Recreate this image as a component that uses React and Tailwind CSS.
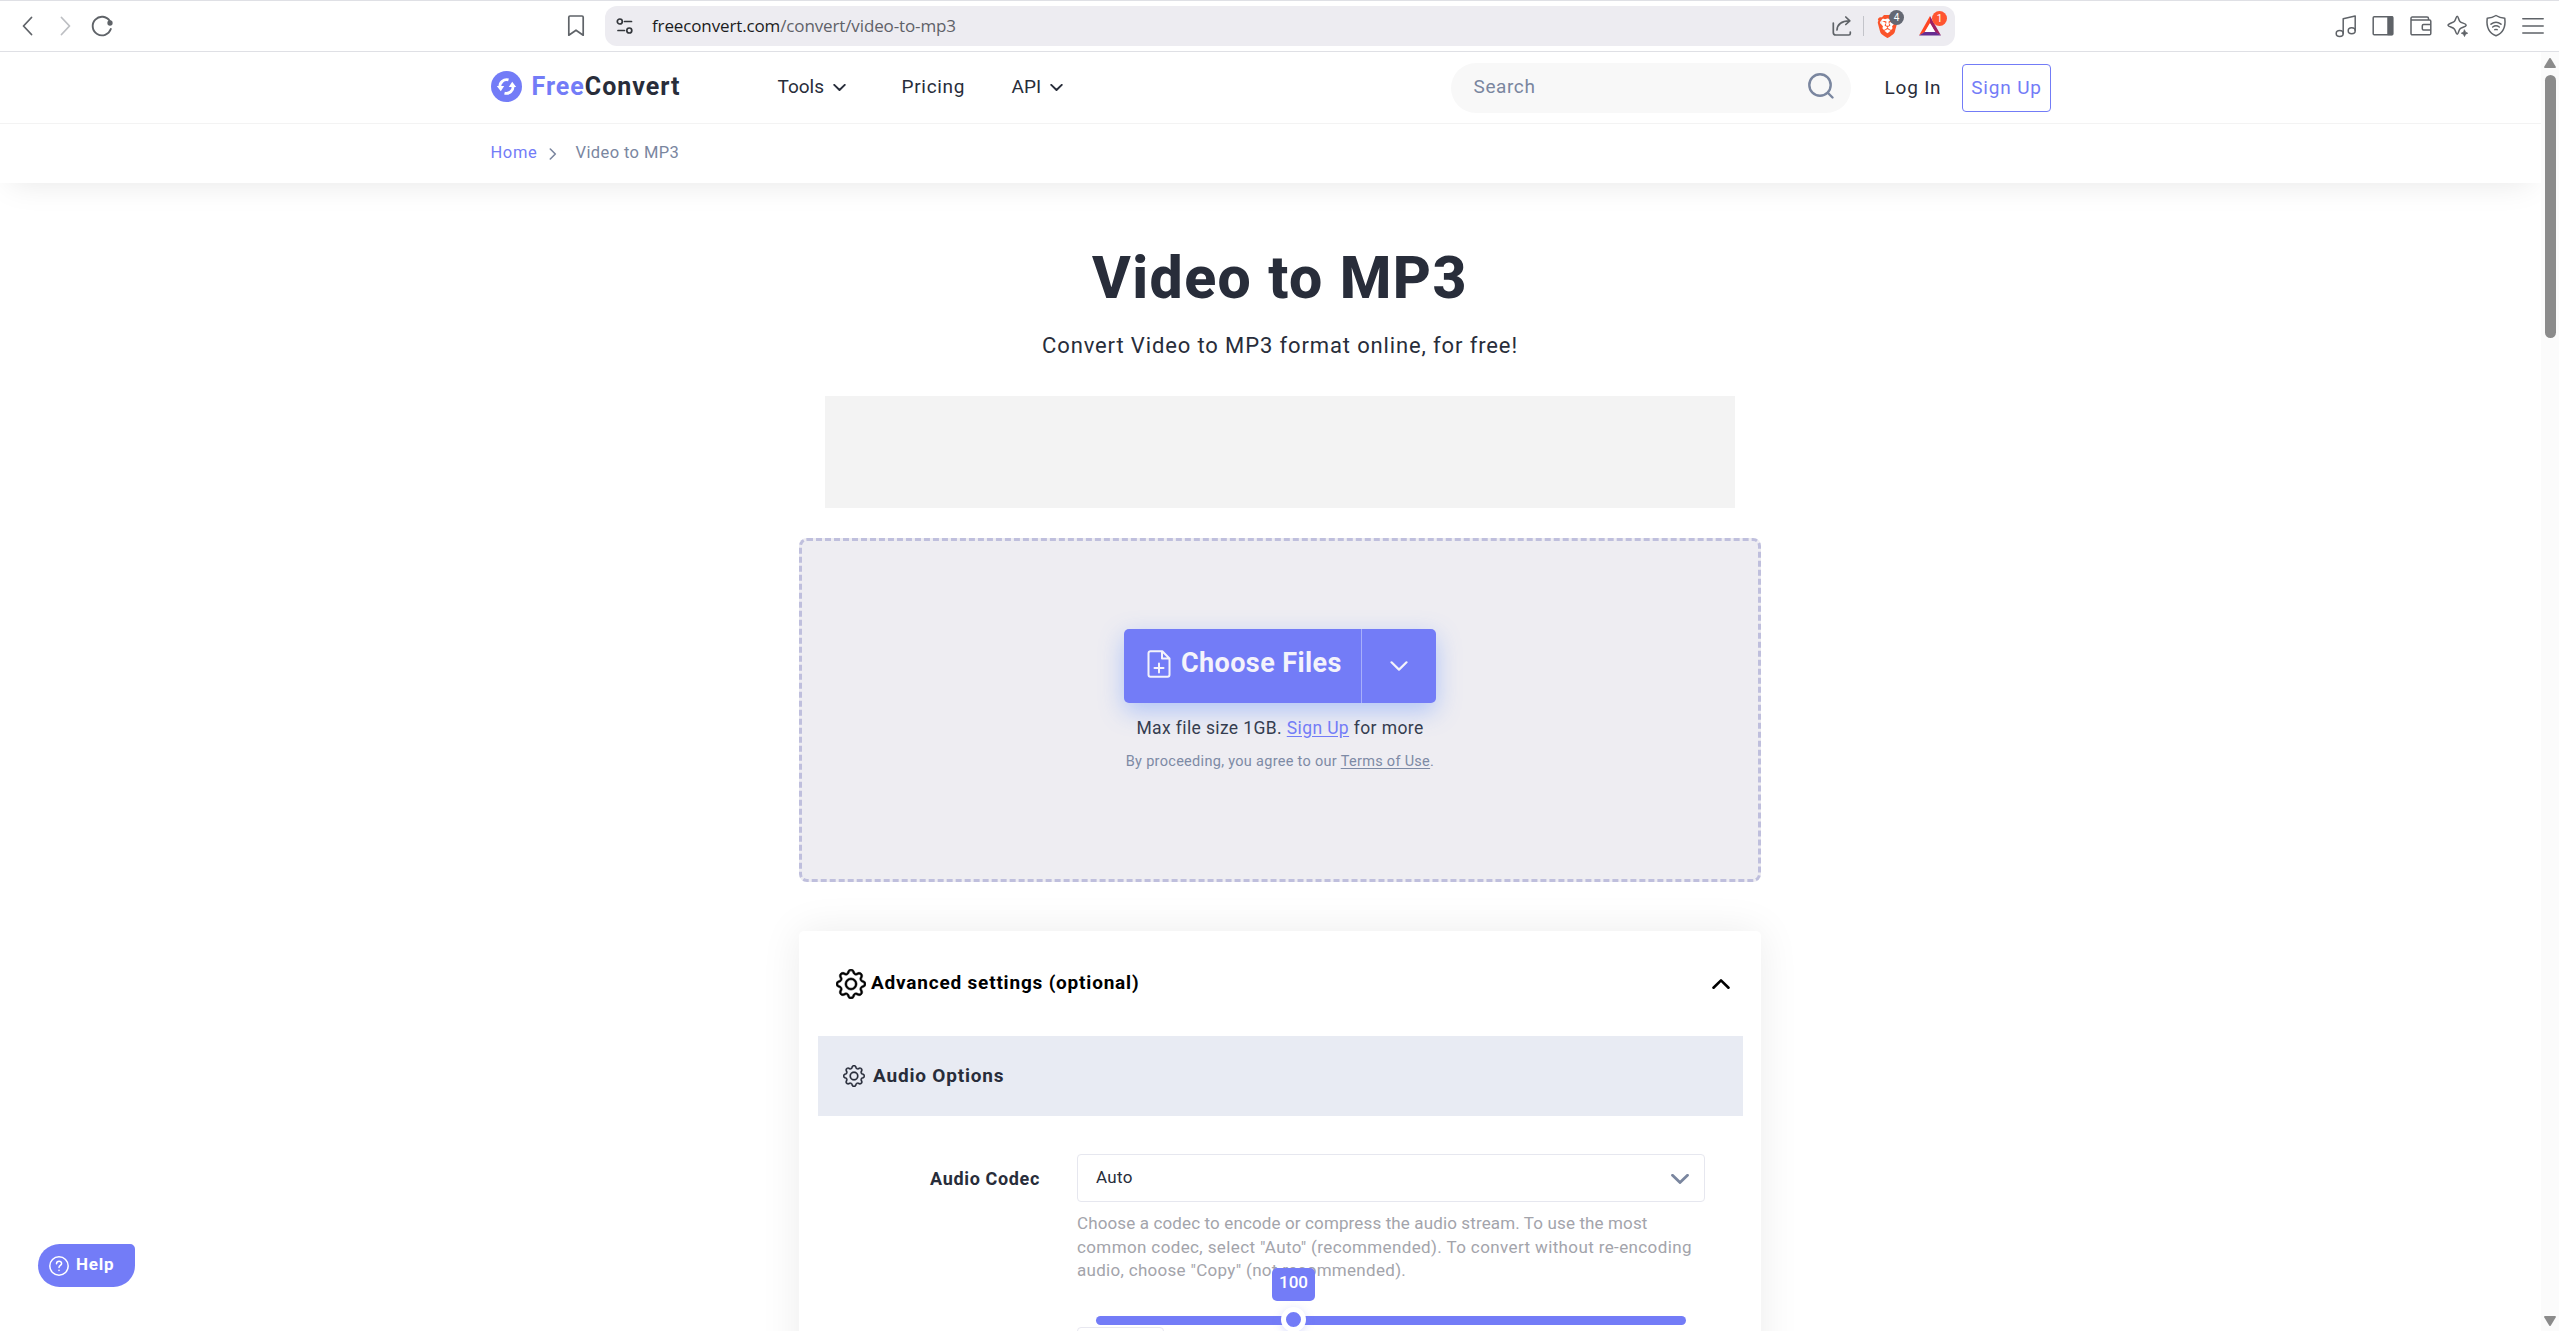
import React from "react";
import { SiBrave } from "react-icons/si";
import { BsGear } from "react-icons/bs";

function Chevron({ className, w = 2.6 }) {
  return (
    <svg viewBox="0 0 18 10" className={className} fill="none" stroke="currentColor" strokeWidth={w} strokeLinecap="round" strokeLinejoin="round">
      <path d="M1.5 1.3 9 8.6l7.5-7.3" />
    </svg>
  );
}

function ToolIcon({ children }) {
  return (
    <svg viewBox="0 0 24 24" className="h-6 w-6 shrink-0" fill="none" stroke="currentColor" strokeWidth="1.5" strokeLinecap="round" strokeLinejoin="round">
      {children}
    </svg>
  );
}

function BrowserBar() {
  return (
    <div className="flex h-[52px] shrink-0 items-center border-y border-[#dfe0e5] bg-white text-[#5f6368]">
      <div className="flex w-[558px] items-center pl-4">
        <svg viewBox="0 0 24 24" className="h-6 w-6" fill="none" stroke="currentColor" strokeWidth="1.8" strokeLinecap="round" strokeLinejoin="round">
          <path d="M15.5 3.5 7.5 12l8 8.5" />
        </svg>
        <svg viewBox="0 0 24 24" className="ml-3.5 h-6 w-6 text-[#bdbfc3]" fill="none" stroke="currentColor" strokeWidth="1.8" strokeLinecap="round" strokeLinejoin="round">
          <path d="m7.500 3.500 8 8.500-8 8.500" />
        </svg>
        <svg viewBox="0 0 24 24" className="ml-3 h-6 w-6" fill="none" stroke="currentColor" strokeWidth="1.9" strokeLinecap="round">
          <path d="M20.800 15a9.300 9.300 0 1 1-1-8" />
          <circle cx="20" cy="9" r="1.700" fill="currentColor" />
        </svg>
      </div>
      <div className="flex w-[47px] items-center pl-1.5">
        <svg viewBox="0 0 24 24" className="h-6 w-6" fill="none" stroke="currentColor" strokeWidth="1.7" strokeLinejoin="round">
          <path d="M6 2h12a1.200 1.200 0 0 1 1.200 1.200v18l-7.200-5-7.200 5v-18A1.200 1.200 0 0 1 6 2z" />
        </svg>
      </div>
      <div className="flex h-10 w-[1350px] items-center rounded-xl bg-[#edecf1] pr-[13px] pl-[10px]">
        <svg viewBox="0 0 20 20" className="h-5 w-5 text-[#33363b]" fill="none" stroke="currentColor" strokeWidth="1.700" strokeLinecap="round">
          <circle cx="4.800" cy="5.500" r="2.500" />
          <path d="M9.500 5.500h7M3 14.500h6.500" />
          <circle cx="14.300" cy="14.500" r="2.500" />
        </svg>
        <span className="ml-[17px] pb-px font-['Open_Sans',sans-serif] text-[17px] leading-none tracking-[-0.13px] text-[#5f6168]">
          <span className="text-[#1b1c21]">freeconvert.com</span>/convert/video-to-mp3
        </span>
        <div className="ml-auto flex items-center">
          <svg viewBox="0 0 22 22" className="h-[22px] w-[22px]" fill="none" stroke="currentColor" strokeWidth="1.700" strokeLinecap="round" strokeLinejoin="round">
            <path d="M2.300 8v9.500a2.500 2.500 0 0 0 2.500 2.500h13a1.500 1.500 0 0 0 1.500-1.500V17" />
            <path d="M6 15c.3-5.500 4-9 12.500-9.200M14.800 2l4 3.800-4 3.700" />
          </svg>
          <div className="ml-[10px] h-5 w-px bg-[#c3c4ca]" />
          <div className="relative ml-[12px] flex h-6 w-[23px] items-center justify-center text-[#fb542b]">
            <div className="absolute h-4 w-3 bg-white" />
            <SiBrave className="relative h-[23px] w-[23px]" />
            <span className="absolute -top-[4px] left-[13px] flex h-[15px] w-[15px] items-center justify-center rounded-full bg-[#646873] font-[Roboto,sans-serif] text-[10px] leading-none text-white">4</span>
          </div>
          <div className="relative ml-[19px] h-[22px] w-6">
            <svg viewBox="0 0 24 22" className="h-[22px] w-6">
              <path d="M12 1 1 20.500l6-3.200L12 8.500z" fill="#ff4724" />
              <path d="M12 1l11 19.500-6-3.200L12 8.500z" fill="#9e1f63" />
              <path d="M1 20.500h22l-6-3.700H7z" fill="#662d91" />
              <path d="m12 8-5.300 9.100h10.600z" fill="#fff" />
            </svg>
            <span className="absolute -top-[4px] left-[14px] flex h-[15px] w-[15px] items-center justify-center rounded-full bg-[#ff5530] font-[Roboto,sans-serif] text-[10px] leading-none text-white">1</span>
          </div>
        </div>
      </div>
      <div className="ml-auto flex items-center gap-[13.5px] pr-[14px]">
        <ToolIcon>
          <path d="M9.200 19.500V4.800l12-2.800v14.500" />
          <ellipse cx="5.700" cy="19.500" rx="3.500" ry="3" />
          <ellipse cx="17.700" cy="16.800" rx="3.500" ry="3" />
        </ToolIcon>
        <ToolIcon>
          <rect x="2.200" y="2.800" width="19.500" height="18" rx="1" />
          <path d="M17 3v17.500h4.500V3z" fill="currentColor" />
        </ToolIcon>
        <ToolIcon>
          <path d="M19.500 6V4.500a1.500 1.500 0 0 0-1.500-1.500H3.500A1.200 1.200 0 0 0 2 4.200v15.300A1.300 1.300 0 0 0 3.300 20.800h17.200a1.300 1.300 0 0 0 1.300-1.300V7.300A1.300 1.300 0 0 0 20.500 6H3M21.500 10.500h-7a1.200 1.200 0 0 0-1.200 1.200v3.100A1.200 1.200 0 0 0 14.500 16h7" />
        </ToolIcon>
        <ToolIcon>
          <path d="M11.200 2.300c-1.200 0-1.400 3.800-2.900 5.200S2 9.700 2 11.200s4.800 1.900 6.300 3.700 1.700 5.300 2.900 5.300 1.300-3.600 2.700-5.200 6.300-2.100 6.300-3.800-4.900-2.100-6.300-3.700-1.500-5.200-2.700-5.200z" />
          <path d="M18.500 16l1 2.200 2.200 1-2.200 1-1 2.300-1-2.300-2.200-1 2.200-1z" fill="currentColor" strokeWidth="0.800" />
        </ToolIcon>
        <ToolIcon>
          <path d="M12 1.500c2.500 1.700 5.500 2.600 8.800 2.800 1 8.500-1.300 14.500-8.800 17.500C4.500 18.800 2.200 12.800 3.200 4.300 6.500 4.100 9.500 3.200 12 1.500z" />
          <path d="M7 10.200c3-2.300 7-2.300 10 0M8.700 13c2-1.500 4.600-1.500 6.600 0M10.800 15.700c.8-.4 1.600-.4 2.400 0" />
        </ToolIcon>
        <ToolIcon>
          <path d="M1.800 4.800h20.400M1.800 12h20.400M1.800 19h20.400" />
        </ToolIcon>
      </div>
    </div>
  );
}

function Logo() {
  return (
    <div className="flex w-[287px] items-center pb-[2px]">
      <svg viewBox="0 0 31 31" className="h-[31px] w-[31px]">
        <circle cx="15.500" cy="15.500" r="15.500" fill="#737cf7" />
        <g fill="none" stroke="#fff" strokeWidth="2.800">
          <path d="M9 16.500A6.800 6.800 0 0 1 17.500 8.900" />
          <path d="M22 14.500a6.800 6.800 0 0 1-8.500 7.600" />
        </g>
        <path d="M5.800 15h7.400l-3.400 5.300zM25.200 16h-7.400l3.400-5.300z" fill="#fff" />
      </svg>
      <span className="ml-[10px] text-[25px] leading-none font-bold tracking-[1px] text-[#282d3a]">
        <span className="text-[#737cf7]">Free</span>Convert
      </span>
    </div>
  );
}

function SiteHeader() {
  return (
    <header className="shrink-0 bg-white shadow-[0_10px_30px_-10px_rgba(0,0,0,0.1)]">
      <div className="h-[72px] border-b border-[#f3f3f3]">
        <div className="mx-auto flex h-full w-[1560px] items-center text-[19px] leading-none text-[#282d3a]">
          <Logo />
          <nav className="flex items-center pb-[2px]">
            <span className="flex w-[124px] items-center">
              Tools
              <Chevron className="mt-px ml-[9px] h-[7px] w-[13px]" w={2.800} />
            </span>
            <span className="w-[110px] tracking-[0.700px]">Pricing</span>
            <span className="flex items-center">
              API
              <Chevron className="mt-px ml-[9px] h-[7px] w-[13px]" w={2.800} />
            </span>
          </nav>
          <div className="ml-auto flex h-[50px] w-[400px] items-center justify-between rounded-full bg-[#f8f8f8] pr-[17px] pl-[23px] text-[#7a869f]">
            <span className="pb-[2px] tracking-[0.600px]">Search</span>
            <svg viewBox="0 0 26 26" className="mb-1 h-[26px] w-[26px]" fill="none" stroke="currentColor" strokeWidth="2.400" strokeLinecap="round">
              <circle cx="12" cy="12" r="10.700" />
              <path d="m20 20 4.500 4.500" />
            </svg>
          </div>
          <span className="ml-[34px] w-[77px] tracking-[0.800px]">Log In</span>
          <span className="flex h-12 w-[89px] items-center justify-center rounded border border-[#737cf7] pl-px tracking-[0.850px] text-[#737cf7]">Sign Up</span>
        </div>
      </div>
      <div className="mx-auto flex h-[59px] w-[1560px] items-center text-[16.500px] leading-none text-[#7a869f]">
        <span className="w-[58px] tracking-[0.600px] text-[#737cf7]">Home</span>
        <svg viewBox="0 0 8 12" className="h-3 w-2" fill="none" stroke="currentColor" strokeWidth="1.600" strokeLinecap="round" strokeLinejoin="round">
          <path d="m1.300 1 5 5-5 5" />
        </svg>
        <span className="ml-[19px] tracking-[0.400px]">Video to MP3</span>
      </div>
    </header>
  );
}

function DropZone() {
  return (
    <section className="mt-[30px] flex h-[344px] w-[962px] shrink-0 flex-col items-center rounded-lg border-[3px] border-dashed border-[#bfbfdd] bg-[#eeedf2] pt-[88px]">
      <div className="flex h-[74px] w-[312px] rounded-[5px] bg-[#737cf7] text-[#f4f3fb] shadow-[0_8px_24px_rgba(90,140,255,0.42)]">
        <div className="flex w-[238px] items-center border-r border-[#a8affa] pb-[5px] pl-[23px]">
          <svg viewBox="0 0 24 28" className="h-7 w-6" fill="none" stroke="currentColor" strokeWidth="2" strokeLinecap="round" strokeLinejoin="round">
            <path d="M3.500 1.200h11.800L22.500 8.500v16.300a2 2 0 0 1-2 2H3.500a2 2 0 0 1-2-2V3.200a2 2 0 0 1 2-2zM15 1.500v7h7M12 13.500v9M7.500 18h9" />
          </svg>
          <span className="ml-[10px] text-[27px] leading-none font-bold tracking-[0.400px]">Choose Files</span>
        </div>
        <div className="flex flex-1 items-center justify-center">
          <Chevron className="h-[10px] w-[18px]" w={2.200} />
        </div>
      </div>
      <p className="mt-[15px] text-[17.500px] leading-5 tracking-[0.380px] text-[#353d50]">
        Max file size 1GB. <span className="text-[#737cf7] underline underline-offset-2">Sign Up</span> for more
      </p>
      <p className="mt-[14px] text-[14.500px] leading-5 tracking-[0.300px] text-[#7d8aa5]">
        By proceeding, you agree to our <span className="underline underline-offset-2">Terms of Use</span>.
      </p>
    </section>
  );
}

function VolumeSlider() {
  return (
    <div className="mt-[33px] ml-[19px]">
      <div className="relative h-[9px] w-[590px] rounded-full bg-[#737cf7]">
        <div className="absolute -top-[9px] left-[185px] h-[25px] w-[25px] rounded-full border-[5px] border-white bg-[#737cf7] shadow-[0_2px_8px_rgba(115,124,247,0.25)]" />
        <div className="absolute -top-12 left-[176px] flex h-[33px] w-[43px] justify-center rounded-[5px] bg-[#737cf7] pt-[6px] text-[17px] leading-4 font-medium text-white">100</div>
      </div>
      <div className="mt-[2px] -ml-[19px] h-12 w-[87px] rounded border border-[#e8e8f0]" />
    </div>
  );
}

function Settings() {
  return (
    <section className="mt-[49px] h-[600px] w-[962px] shrink-0 rounded-[5px] bg-white px-[19px] shadow-[0_0_40px_rgba(0,0,0,0.08)]">
      <div className="flex h-[105px] items-center pr-[12px] pl-[18px] text-black">
        <BsGear className="h-[30px] w-[30px]" stroke="currentColor" strokeWidth="0.300" />
        <span className="ml-[5px] pb-[2px] text-[19px] leading-none font-bold tracking-[0.800px]">Advanced settings (optional)</span>
        <Chevron className="ml-auto h-[10px] w-[18px] rotate-180" />
      </div>
      <div className="flex h-20 w-[925px] items-center bg-[#e8ebf3] pl-[25px] text-[#282d3a]">
        <BsGear className="h-[22px] w-[22px]" stroke="currentColor" strokeWidth="0.200" />
        <span className="ml-2 pb-[2px] text-[19px] leading-none font-bold tracking-[0.800px]">Audio Options</span>
      </div>
      <div className="flex pt-[38px]">
        <div className="w-[259px] pt-[16px] pr-[37px] text-right text-[18px] leading-[18px] font-bold tracking-[0.650px] text-[#282d3a]">Audio Codec</div>
        <div>
          <div className="flex h-12 w-[628px] items-center justify-between rounded border border-[#e6e7ef] pr-[15px] pl-[18px]">
            <span className="pb-[2px] text-[17px] leading-none tracking-[0.300px] text-[#282d3a]">Auto</span>
            <Chevron className="mt-[2px] h-[10px] w-[18px] text-[#7a869f]" w={2.800} />
          </div>
          <p className="mt-[10px] text-[17px] leading-[23.500px] text-[#a3a4ab]">
            <span className="block tracking-[0.130px]">Choose a codec to encode or compress the audio stream. To use the most</span>
            <span className="block tracking-[0.380px]">common codec, select "Auto" (recommended). To convert without re-encoding</span>
            <span className="block tracking-[0.300px]">audio, choose "Copy" (not recommended).</span>
          </p>
          <VolumeSlider />
        </div>
      </div>
    </section>
  );
}

function Scrollbar() {
  return (
    <div className="flex w-[18px] shrink-0 flex-col items-center bg-[#fbfbfb] pt-[6px] pb-[5px] text-[#8b8b8b]">
      <svg viewBox="0 0 12 10" className="h-[10px] w-3" fill="currentColor">
        <path d="M5 .7a1.200 1.200 0 0 1 2 0l4.800 8c.3.600 0 1.300-.8 1.300H1c-.8 0-1.100-.7-.8-1.300z" />
      </svg>
      <div className="mt-[7px] h-[263px] w-[11px] rounded-full bg-[#8b8b8b]" />
      <svg viewBox="0 0 12 10" className="mt-auto h-[10px] w-3 rotate-180" fill="currentColor">
        <path d="M5 .7a1.200 1.200 0 0 1 2 0l4.800 8c.3.600 0 1.300-.8 1.300H1c-.8 0-1.100-.7-.8-1.300z" />
      </svg>
    </div>
  );
}

export default function App() {
  return (
    <div className="flex h-[1331px] w-[2559px] flex-col overflow-hidden bg-white font-[Roboto,sans-serif]">
      <BrowserBar />
      <div className="flex min-h-0 flex-1">
        <div className="flex min-w-0 flex-1 flex-col overflow-hidden">
          <SiteHeader />
          <main className="flex min-h-0 flex-1 flex-col items-center pl-[19px]">
            <h1 className="mt-[65px] text-[59px] leading-[60px] font-extrabold tracking-[1.400px] text-[#282d3a]">Video to MP3</h1>
            <p className="mt-[25px] text-[22px] leading-[26px] tracking-[0.870px] text-[#282d3a]">Convert Video to MP3 format online, for free!</p>
            <div className="mt-[37px] h-[112px] w-[910px] shrink-0 bg-[#f3f3f3]" />
            <DropZone />
            <Settings />
          </main>
        </div>
        <Scrollbar />
      </div>
      <button className="absolute top-[1244px] left-[38px] flex h-[43px] w-[97px] items-center rounded-[22px] rounded-tr-[5px] bg-[#737cf7] pl-[11px] text-white">
        <svg viewBox="0 0 20 20" className="h-5 w-5" fill="none" stroke="currentColor" strokeWidth="1.500" strokeLinecap="round" strokeLinejoin="round">
          <circle cx="10" cy="10" r="9.200" />
          <path d="M7.500 7.800c.2-3.300 5.200-3.200 5.100-.2C12.500 9.300 10 9.500 10 11.500M10 14.200v.2" />
        </svg>
        <span className="ml-[7px] pb-[3px] text-[17px] leading-none font-bold tracking-[0.800px]">Help</span>
      </button>
    </div>
  );
}
